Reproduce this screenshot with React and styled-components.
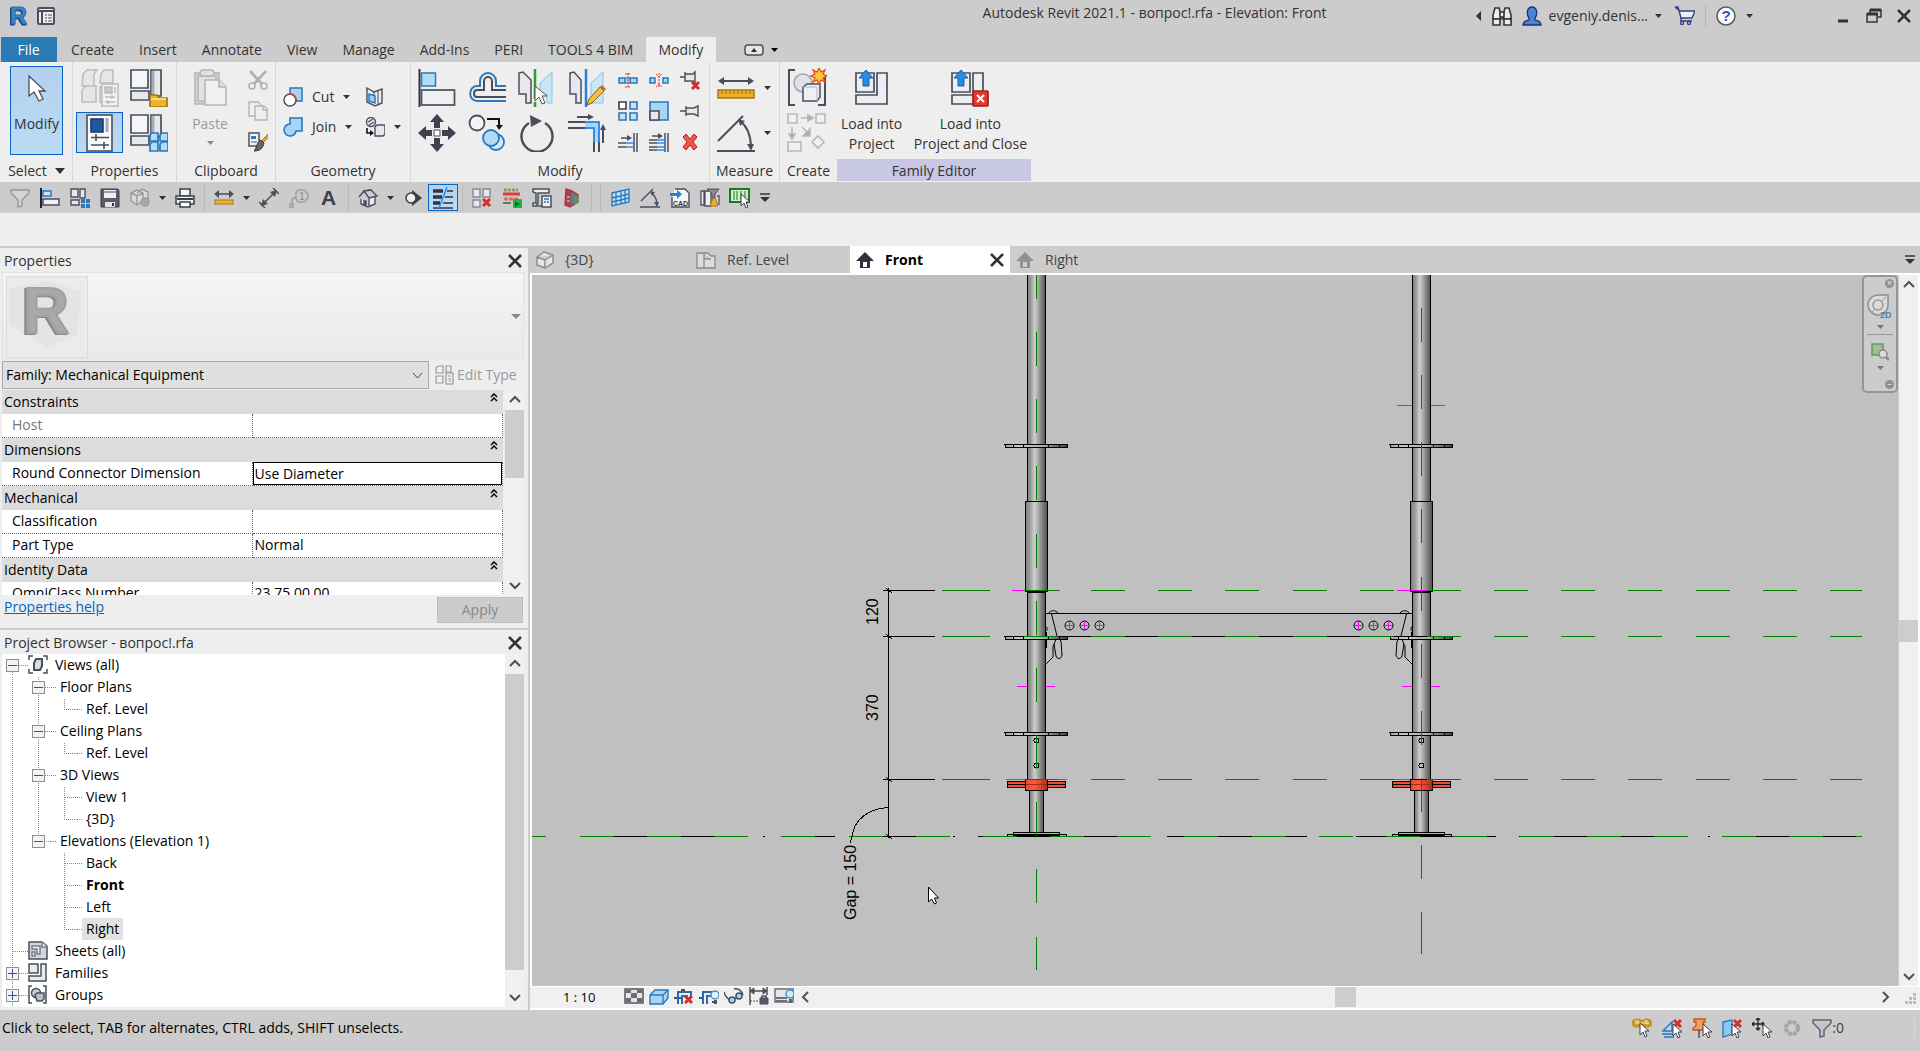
import React, { useState } from 'react';
import styled, { createGlobalStyle, css } from 'styled-components';

const D = '#4a4f5b';
const B = '#2a78bd';
const L = '#b4dbf4';
const G = '#e6e8ee';

const cursor = (x, y) => (
  <path d={`M${x} ${y}v12l3-3 2 5 2-1-2-5h4z`} fill="#fff" stroke="#3c404a" />
);
const redX = (x, y, s = 7) => (
  <path d={`M${x} ${y}l${s} ${s}m0-${s}l-${s} ${s}`} stroke="#d22f2f" strokeWidth="3" />
);

// every icon is [box size, drawing]
const icons = {
  logo: [24, <g>
    <text x="3" y="20" fontFamily="Liberation Sans, sans-serif" fontWeight="bold" fontSize="24" fill="#3b86cf" stroke="#2a6cae" filter="drop-shadow(-1px 1px 0 #12436f)">R</text>
  </g>],
  home: [20, <g>
    <rect x="2" y="2" width="16" height="16" rx="1" fill="#eceef2" stroke={D} strokeWidth="2" />
    <path d="M2 5h16M6 6v12" stroke={D} strokeWidth="2" />
    <path d="M9 9h2m1 0h4m-7 3h2m1 0h4m-7 3h2m1 0h4" stroke={D} strokeWidth="1" />
  </g>],
  arrow: [38, <path d="M11 5v20l5-4 5 9 4-2-4-8h6z" fill="#fff" stroke="#4a4f5b" strokeWidth="1.3" />],
  typeProps: [38, <g fill="#e6e6e6" stroke="#bcbcbc" strokeWidth="1.5">
    <path d="M2 5l4-4h10l-3 4v12H1z M2 20l3-3h10v16H1V22z M20 5l3-4h9v13h-13z M19 18h9v15h-9z" />
    <rect x="21" y="15" width="16" height="22" fill="#f3f3f3" />
    <rect x="24" y="18" width="7" height="6" fill="#c8c8c8" />
    <path d="M24 28h10m-10 5h10m-3-7v4m-4 1v4M34 18v6" />
  </g>],
  famTypes: [38, <g fill={G} stroke={D} strokeWidth="1.7">
    <path d="M1 1h17v18H1z" fill="#f4f5f8" />
    <path d="M21 1h10v26H21z" /><path d="M23 2v24" stroke="#a9adb6" strokeWidth="3" />
    <path d="M1 22h18v9H1z" />
    <path d="M20 26h7l2 3h8v9H20z" fill="#eeb42e" stroke="#a8740c" />
    <path d="M21 30h15" stroke="#fbdf86" />
  </g>],
  properties: [38, <g stroke={D} strokeWidth="1.6">
    <rect x="6" y="1" width="25" height="36" fill="#fafafa" />
    <rect x="10" y="5" width="12" height="13" fill="#24589e" stroke="#163c74" />
    <path d="M26 4v14" stroke="#a9adb6" strokeWidth="3" />
    <path d="M10 23.500h18M10 31h18M15 20v7M23 28v7" />
  </g>],
  famCategory: [38, <g fill={G} stroke={D} strokeWidth="1.7">
    <path d="M1 1h17v18H1z" fill="#f4f5f8" />
    <path d="M21 1h10v22H21z" /><path d="M23 2v20" strokeWidth="3" stroke="#a9adb6" />
    <path d="M1 22h18v9H1z" />
    <path d="M20 21l2-2h6v8h-8zM30 21l2-2h6v8h-8zM20 30l2-2h6v9h-8zM30 30l2-2h6v9h-8z" fill="#b5dcf4" stroke={B} />
  </g>],
  paste: [38, <g fill="#e2e2e2" stroke="#b4b4b4" strokeWidth="1.5">
    <path d="M4 4h24v31H4z" fill="#d4d4d4" /><path d="M7 7h18v25H7z" />
    <rect x="9" y="1" width="14" height="6" rx="3" />
    <path d="M14 11h14l7 7v18H14z" fill="#f0f0f0" /><path d="M28 11v7h7" />
  </g>],
  cutClip: [20, <g fill="none" stroke="#b0b0b0" strokeWidth="1.6">
    <path d="M2 1l12 13M18 1L6 14" strokeWidth="2.600" />
    <circle cx="4" cy="16" r="3" /><circle cx="16" cy="16" r="3" />
  </g>],
  copyClip: [20, <g fill="#efefef" stroke="#b4b4b4" strokeWidth="1.4">
    <path d="M1 1h9l3 3v11H1z" /><path d="M7 5h9l3 3v11H7z" /><path d="M15 5v4h4" />
  </g>],
  match: [20, <g>
    <rect x="1" y="1" width="10" height="13" fill="#f4f4f4" stroke={D} strokeWidth="1.5" />
    <path d="M3 4h5v3H3z" fill={B} /><path d="M3 10h6" stroke={D} />
    <path d="M20 2l-7 7 2 2 6-6z" fill="#e0a02c" stroke="#8b6018" strokeWidth=".6" />
    <path d="M13 8l3 3c-1 5-4 8-10 8 3-3 2-8 7-11z" fill="#60656f" stroke="#30343c" />
  </g>],
  cutGeom: [20, <g>
    <path d="M7 1h12v13H7z" fill="#a8d4f2" stroke={B} strokeWidth="1.5" />
    <circle cx="7" cy="13" r="6" fill="#fff" stroke={D} strokeWidth="1.5" />
    <path d="M7 7a6 6 0 0 1 6 6" fill="none" stroke="#ee3a2c" strokeWidth="2" />
  </g>],
  join: [20, <path d="M7 1h12v13h-6a6 6 0 1 1-6-7z" fill="#a8d4f2" stroke={B} strokeWidth="1.6" />],
  wallJoin: [20, <g>
    <path d="M2 1l7 4 8-3v14l-7 3-8-4z" fill="#eceef2" stroke={D} strokeWidth="1.4" />
    <path d="M4 7l6 2v7l-6-2z" fill="#9fd0f0" stroke={B} strokeWidth="1.500" />
    <path d="M9 5v4M13 4v13" stroke={D} />
  </g>],
  demolish: [20, <g fill="none" stroke={D} strokeWidth="1.4">
    <circle cx="6" cy="5" r="4.500" fill="#e9e9ee" /><path d="M3 5l5-3M4 8l5-3" />
    <path d="M10 10l2-2h8v9l-2 2h-8z" fill={G} />
    <path d="M2 11v5h5" stroke="#111" strokeWidth="1.600" /><path d="M5 13l4 3-4 3z" fill="#111" stroke="none" />
  </g>],
  align: [38, <g>
    <path d="M1.500 0v38" stroke="#30343e" strokeWidth="2" />
    <rect x="3.500" y="4" width="14" height="13" fill={L} stroke={B} strokeWidth="1.500" />
    <rect x="3.500" y="21" width="33" height="15" fill="#f0f1f5" stroke={D} strokeWidth="1.700" />
  </g>],
  offset: [38, <g fill="none" strokeWidth="2">
    <path d="M38 17H28V12a8 8 0 0 0-16 0v5H9c-9 0-9 15 0 15h29" stroke={B} />
    <path d="M38 21H24V12a4 4 0 0 0-8 0v9H9c-4 0-4 7 0 7h29" stroke={D} />
  </g>],
  mirrorPick: [38, <g>
    <path d="M1 4l4-1 8 8v23H8V25H1z" fill={G} stroke={D} strokeWidth="1.500" />
    <path d="M34 3v31h-5v-9h-7V14z" fill="#c9e6f6" stroke="#8cc2e4" />
    <path d="M17 0v30m0 3v5" stroke="#2f9a36" strokeWidth="2.500" />
    <path d="M17 17v15l4-4 3 7 3-1-3-7h5z" fill="#fff" stroke={D} />
  </g>],
  mirrorDraw: [38, <g>
    <path d="M2 4l4-1 7 8v23H8V25H2z" fill={G} stroke={D} strokeWidth="1.500" />
    <path d="M35 3v31h-12V14z" fill="#c9e6f6" stroke="#8cc2e4" />
    <path d="M18 0v38" stroke="#2482dc" strokeWidth="2.500" />
    <path d="M19 36l2-6 11-12 4 4-12 12z" fill="#f1c13c" stroke="#8b5b14" />
    <path d="M32 18l2-2 4 4-2 2z" fill="#c5654c" />
  </g>],
  move: [38, <g fill="#3d424e">
    <path d="M19 0l7 8h-4v6h-6V8h-4zM19 38l7-8h-4v-6h-6v6h-4zM0 19l8-7v4h6v6H8v4zM38 19l-8-7v4h-6v6h6v4z" />
    <rect x="16" y="16" width="6" height="6" fill="#fff" stroke={D} />
  </g>],
  copy: [38, <g strokeWidth="1.800">
    <circle cx="9" cy="9" r="7.500" fill="#f3f3f6" stroke={D} />
    <path d="M19 5h12v8" fill="none" stroke="#111" strokeWidth="2" /><path d="M28 11h7l-4 5z" fill="#111" />
    <circle cx="28" cy="28" r="8" fill="#d3ebf8" stroke={B} /><circle cx="23" cy="24" r="8" fill={L} stroke={B} />
  </g>],
  rotate: [38, <g>
    <path d="M11 9a15.500 15.500 0 1 0 16 0" fill="none" stroke={D} strokeWidth="2.500" />
    <path d="M12 1l12 6-11 6z" fill={D} />
  </g>],
  trimCorner: [38, <g fill="none" strokeWidth="2">
    <path d="M0 8h17M0 14h17M26 28v10M31 28v10" stroke={D} />
    <path d="M17 11h11v17" stroke="#a8d6f6" strokeWidth="4" />
    <path d="M17 8h14v20M17 14h9v14" stroke="#2d8fe8" />
    <path d="M9 3h15m11 26V13" stroke={D} /><path d="M20 0l6 3-6 3zM32 16l3-6 3 6z" fill={D} stroke="none" />
  </g>],
  split: [20, <g>
    <path d="M1 8h6v5H1zM12 8h7v5h-7z" fill="#a8d4f2" stroke={B} strokeWidth="1.500" />
    <path d="M7 8h5v5H7z" fill="#a8d4f2" stroke={B} />
    <path d="M10 3v15M7 4l6 0M7 17h6" stroke="#d93025" strokeDasharray="2 1" />
  </g>],
  splitGap: [20, <g>
    <path d="M1 8h5v5H1zM14 8h5v5h-5z" fill="#a8d4f2" stroke={B} strokeWidth="1.500" />
    <path d="M10 3v15M7 4l3 3 3-3M7 17l3-3 3 3" stroke="#d93025" fill="none" strokeDasharray="2 1" />
  </g>],
  unpin: [20, <g fill={G} stroke={D} strokeWidth="1.400">
    <path d="M0 7h5M5 2v10M5 4h8l2-2v11l-2-2H5z" />{redX(12, 12)}
  </g>],
  array: [20, <g strokeWidth="1.600">
    <path d="M1 1h7v7H1z" fill="#fff" stroke="#3a3e48" />
    <path d="M12 1h7v7h-7zM1 12h7v7H1zM12 12h7v7h-7z" fill="#c4e3f6" stroke={B} />
  </g>],
  scale: [20, <g strokeWidth="1.600">
    <path d="M1 1h18v18H1z" fill="#a8d6f2" stroke={B} /><path d="M1 10h9v9H1z" fill={G} stroke={D} />
  </g>],
  pin: [20, <path d="M0 10h6M6 5v10M6 7h8l4-2v10l-4-2H6" fill={G} stroke={D} strokeWidth="1.400" />],
  trimOne: [20, <g strokeWidth="1.500">
    <path d="M0 11h8M0 15h8M19 1v19M16 1v19M3 6h8" stroke={D} /><path d="M8 11h8M8 15h8" stroke="#2d8fe8" />
    <path d="M9 3l5 3-5 3z" fill={D} />
  </g>],
  trimMany: [20, <g strokeWidth="1.500">
    <path d="M0 8h8M0 11h8M0 15h8M0 18h8M19 1v19M16 1v19M3 4h8" stroke={D} />
    <path d="M8 8h8M8 11h8M8 15h8M8 18h8" stroke="#2d8fe8" /><path d="M9 1l5 3-5 3z" fill={D} />
  </g>],
  del: [20, <path d="M3 5l3-3 4 5 4-5 3 3-4 5 4 5-3 3-4-5-4 5-3-3 4-5z" fill="#f2554d" stroke="#b3211b" />],
  measure: [38, <g>
    <path d="M4 12h30" stroke={D} strokeWidth="2" /><path d="M1 12l6-4v8zM37 12l-6-4v8z" fill={D} />
    <rect x="1" y="21" width="36" height="8" fill="#ecb028" stroke="#a87612" strokeWidth="1.500" />
    <path d="M5 22v3m4-3v3m4-3v3m4-3v3m4-3v3m4-3v3m4-3v3m4-3v3" stroke="#8b6010" />
  </g>],
  angle: [38, <g fill="none" stroke={D} strokeWidth="2">
    <path d="M1 27L26 2M0 37h38M23 7c8 6 11 17 11 27" />
    <path d="M21 5l7 2-5 5zM30 30h7l-3 7z" fill={D} stroke="none" />
  </g>],
  createGroup: [40, <g>
    <path d="M8 2H2v35h6M31 37h7V8" fill="none" stroke={D} strokeWidth="2" />
    <circle cx="16" cy="15" r="9" fill="#dfe2ea" stroke="#a0a4ae" strokeWidth="1.500" />
    <path d="M16 19l4-3h13v13l-3 4H16z" fill="#eef0f5" stroke={D} strokeWidth="1.500" /><path d="M16 19h14v14" fill="none" stroke="#b0b4bd" />
    <path d="M32 0l2 4 4-2-2 4 4 2-4 2 2 4-4-2-2 4-2-4-4 2 2-4-4-2 4-2-2-4 4 2z" fill="#fbc63a" stroke="#e24c1b" strokeWidth="1.300" />
  </g>],
  createSim: [40, <g fill="#f0f0f0" stroke="#b8b8b8" strokeWidth="1.600">
    <path d="M1 1h9v9H1zM29 1h9v9h-9zM1 29h13v9H1zM31 23l6 6-6 6-6-6z" />
    <path d="M14 5h8M5 14v8M15 14l6 6" /><path d="M21 2l5 3-5 3zM2 21l3 5 3-5zM23 16v7h-7z" fill="#a8a8a8" />
  </g>],
  load: [38, <g fill="#eceef3" stroke={D} strokeWidth="1.700">
    <path d="M3 4h18v19H3zM24 4h10v31H3V26h21z" />
    <path d="M13 1l7 8h-4v8h-6V9H6z" fill="#2a8ae4" stroke="#1562b0" strokeWidth="1" />
  </g>],
  loadClose: [38, <g fill="#eceef3" stroke={D} strokeWidth="1.700">
    <path d="M1 4h18v19H1zM22 4h10v20H22zM1 26h22v9H1z" />
    <path d="M10 1l7 8h-4v8H7V9H3z" fill="#2a8ae4" stroke="#1562b0" strokeWidth="1" />
    <rect x="22" y="22" width="15" height="15" rx="1" fill="#e03a32" stroke="#a1201b" />
    <path d="M26 26l7 7m0-7l-7 7" stroke="#fff" strokeWidth="2" />
  </g>],
  filter: [20, <path d="M1 2h18v3l-7 7v6l-4 1v-7L1 5z" fill="#d4d4d4" stroke="#939393" strokeWidth="1.300" />],
  alignSm: [20, <g><path d="M1 0v20" stroke="#222" strokeWidth="2" />
    <path d="M3 3h8v5H3z" fill="#cfe8f8" stroke={B} strokeWidth="1.500" /><path d="M3 11h16v6H3z" fill="#f0f0f4" stroke={D} strokeWidth="1.500" /></g>],
  famSm: [20, <g><path d="M1 1h7v8H1zM10 1h5v9h-5zM1 12h8v5H1z" fill={G} stroke={D} strokeWidth="1.400" />
    <path d="M11 11h4v4h-4zM16 11h4v4h-4zM11 16h4v4h-4zM16 16h4v4h-4z" fill={B} /></g>],
  save: [20, <g><path d="M1 1h17l1 2v16H1z" fill="#585d69" stroke="#3b3f49" /><rect x="4" y="2" width="12" height="8" fill="#eee" />
    <path d="M4 4h12" stroke="#4a4f5b" /><rect x="5" y="14" width="10" height="5" fill="#e4e4e8" /><rect x="12" y="15" width="2" height="3" fill="#333" /></g>],
  sync: [20, <g fill="#dadada" stroke="#9a9a9a" strokeWidth="1.400"><path d="M1 5l6-3 6 3v8l-6 4-6-4zM7 5l5-4 6 3v8l-5 3M1 5l6 3 6-3M7 8v9" /><circle cx="15" cy="14" r="4" fill="#a9a9a9" /></g>],
  print: [20, <g strokeWidth="1.500" stroke="#3b3f49"><path d="M5 1h10v7H5z" fill="#f4f4f4" /><path d="M1 8h18v8H1z" fill="#f0f0f4" /><path d="M2 11h16" strokeWidth="2" /><path d="M5 14h10v5H5z" fill="#fff" /></g>],
  measureSm: [20, <g><path d="M2 6h16" stroke={D} strokeWidth="1.500" /><path d="M0 6l5-4v8zM20 6l-5-4v8z" fill={D} /><rect x="1" y="12" width="18" height="4" fill="#eeb22a" stroke="#a87612" /></g>],
  dim: [20, <g stroke={D} strokeWidth="1.500"><path d="M4 16L16 4M0 14l6 6M14 0l6 6" /><path d="M2 18l2-7 5 5zM18 2l-7 2 5 5z" fill={D} stroke="none" /></g>],
  tag: [20, <g fill="none" stroke="#a0a0a0" strokeWidth="1.500"><path d="M9 2h6l4 4v4l-4 4H9L7 11V5zM7 9L3 11v5" /><rect x="1" y="16" width="3" height="3" />
    <text x="10" y="12" fontSize="10" fontFamily="Liberation Sans, sans-serif" fill="#888" stroke="none">1</text></g>],
  text: [20, <text x="2" y="17" fontSize="21" fontWeight="bold" fontFamily="Liberation Sans, sans-serif" fill="#3d4047">A</text>],
  house: [20, <g stroke={D} strokeWidth="1.400" fill="#e9eaef"><path d="M3 9v7l7 3 7-3V8l-5-6-6 1z" /><path d="M1 9l5-6 5 7v9M6 3l7-1 6 6-8 2" fill="#c9ccd4" /><path d="M6 13h2v4H6z" fill={D} /></g>],
  section: [20, <g><path d="M9 2l10 8-10 8z" fill="#3b3f49" /><circle cx="8" cy="10" r="5" fill="#eee" stroke="#3b3f49" strokeWidth="1.500" /></g>],
  thin: [24, <g stroke="#30343e"><path d="M2 5h10M2 11h9M2 17h7" strokeWidth="3.500" /><path d="M16 5h6M14 11h8M12 17h10M2 22h20" strokeWidth="1.500" /><path d="M16 1L8 22" stroke="#2d8fe8" strokeWidth="1.600" /></g>],
  closeHidden: [20, <g fill={G} stroke="#858993" strokeWidth="1.400"><path d="M1 1h7v8H1zM1 12h7v7H1zM11 1h7v8h-7z" />{redX(11, 11)}</g>],
  switchWin: [20, <g><path d="M2 2h14" stroke="#8b9a70" strokeWidth="3" strokeDasharray="3 1" /><path d="M1 6h17" stroke="#d84040" strokeWidth="3" /><path d="M2 11h14" stroke="#e26a5a" strokeWidth="3" strokeDasharray="4 1" /><path d="M1 15h8" stroke="#3e8d4a" strokeWidth="2" />
    <rect x="11" y="11" width="9" height="9" rx="1" fill="#16b840" /><path d="M13 14l5 2-5 3z" fill="#063" /></g>],
  userInt: [20, <g fill="#eee" stroke={D} strokeWidth="1.500"><path d="M3 1h14v4H6v10l-2 3H1v-3h3V5L1 4V1zM5 18h6" /><rect x="10" y="8" width="9" height="11" /><path d="M12 11h5M12 14h2m1 0h2" stroke={B} /></g>],
  renderCube: [20, <g><path d="M4 1l6 2 6 4v7l-8 5-5-2z" fill="#9a4850" stroke="#b8353a" strokeWidth="1.500" /><path d="M9 4l4 2v9l-4 3z" fill="#5878a8" /><path d="M12 6l5 3v5l-5 3z" fill="#6a8a68" /><path d="M5 9h3M5 13h3" stroke="#ddd" /></g>],
  grid: [20, <g stroke={B} strokeWidth="1.300" fill="#c2e0f4"><path d="M2 5l17-4v13L2 18z" /><path d="M6 4v13M11 3v13M15 2v13M2 10l17-4M2 14l17-4" /></g>],
  angleSm: [20, <g fill="none" stroke={D} strokeWidth="1.400"><path d="M1 13L13 1M0 19h20M11 5c5 3 6 8 6 12" /><path d="M10 3l5 1-3 4zM14 14h5l-2 5z" fill={D} stroke="none" /></g>],
  cad: [20, <g><path d="M5 1h10l4 4v14H2V9" fill="#f4f4f6" stroke={D} strokeWidth="1.400" /><path d="M0 5h7V2l5 4-5 5V8H0z" fill="#2384d8" /><text x="3" y="18" fontSize="7" fontWeight="bold" fontFamily="Liberation Sans, sans-serif" fill="#333">CAD</text></g>],
  purge: [20, <g><path d="M1 3h3v14H1zM5 3h6v15H5zM17 8h2v9" fill="#f0f0f4" stroke={D} strokeWidth="1.300" /><path d="M7 1h12l-4 5v4h-3V6z" fill="#888c96" stroke={D} /><path d="M13 10h2l3 8h-8z" fill="#f0b02a" stroke="#a87410" /></g>],
  selBox: [22, <g><rect x="1" y="2" width="19" height="13" fill="#d6ebd0" stroke="#187a1e" strokeWidth="2" /><path d="M5 4v9M8 4v9M12 4v9M16 4v9" stroke="#187a1e" />{cursor(12, 7)}</g>],
  bino: [20, <g stroke="#333" strokeWidth="1.600" fill="#ececec"><path d="M3 2h4l2 7v4H1V9zM13 2h4l2 7v4h-8V9z" /><path d="M1 13h7v6H1zM12 13h7v6h-7zM8 6h4v5H8z" /></g>],
  user: [20, <g fill="#4c83d6" stroke="#183470" strokeWidth="1.300"><path d="M1 19c0-4 3-4 6-5v-2C4 8 5 1 10 1s6 7 3 11v2c3 1 6 1 6 5z" /></g>],
  cart: [20, <g stroke="#33427e" strokeWidth="1.400"><path d="M0 1h3l3 11h11l3-7H5z" fill="#eef0f8" /><path d="M6 12v3h11" fill="none" /><circle cx="7" cy="17" r="1.500" fill="#fff" /><circle cx="14" cy="17" r="1.500" fill="#fff" /></g>],
  help: [20, <g><circle cx="10" cy="10" r="9" fill="#fafafa" stroke="#555963" strokeWidth="1.500" /><text x="10" y="15" textAnchor="middle" fontSize="15" fontWeight="bold" fontFamily="Liberation Sans, sans-serif" fill="#2458b4">?</text></g>],
  editType: [20, <g fill="#eee" stroke="#9a9a9a" strokeWidth="1.200"><path d="M1 3l2-2h5v7H1zM11 1h5v6h-5zM1 11h7v7H1z" /><rect x="11" y="8" width="7" height="11" /><path d="M13 11h3M13 14h3M14 16h2" /></g>],
  views: [20, <g fill="none" stroke={D} strokeWidth="1.500"><path d="M5 1H1v4M15 1h4v4M5 18H1v-4M15 18h4v-4" /><path d="M6 8l2-4h6v7l-2 4H6z" fill="#d9dce4" strokeWidth="2" /></g>],
  sheets: [20, <g fill="#d2d5dc" stroke={D} strokeWidth="1.500"><path d="M1 1h13l5 4v13H1z" /><path d="M4 5h8v8H9V8H4zM4 11h3v4H4zM14 1v5h5" fill="#f3f3f6" stroke="#777c88" /></g>],
  families: [20, <path d="M1 1h9v9H1zM13 1h5v17H1v-5h12z" fill="#e9ebf0" stroke={D} strokeWidth="1.500" />],
  groups: [20, <g fill="none" stroke={D} strokeWidth="1.500"><path d="M4 1H1v17h3M15 1h3v17h-3" /><circle cx="8" cy="8" r="4.500" fill="#c8ccd6" /><path d="M7 10l2-2h7v6l-2 2H9z" fill="#b8bdc9" /></g>],
  cube: [18, <path d="M1 6l7-5 9 3v8l-8 5-8-3zM1 6l8 3 8-5M9 9v8" fill="#e4e4e4" stroke="#8a8a8a" strokeWidth="1.400" />],
  plan: [20, <path d="M1 3h7v15H1zM8 3h4l3 3h4v12H8V9h7" fill="#ddd" stroke="#8a8a8a" strokeWidth="1.300" />],
  elevOn: [18, <g fill="#2e323c"><path d="M9 1l9 9h-4v7H4v-7H0z" /><path d="M7 11h4v5H7z" fill="#fff" /></g>],
  elevOff: [18, <g fill="#8e9199"><path d="M9 1l9 9h-4v7H4v-7H0z" /><path d="M7 11h4v5H7z" fill="#ccc" /></g>],
  detail: [20, <g><path d="M1 2h18v14H1z" fill="#e6e6e6" stroke="#555" strokeWidth="1.500" /><path d="M2 3h5v3H2zM13 3h5v3h-5zM7 6h6v5H7zM2 11h5v4H2zM13 11h5v4h-5z" fill="#666b75" /></g>],
  visual: [20, <g stroke={B} strokeWidth="1.400" fill="#a9d5f2"><path d="M1 8l5-5h13v8l-5 6H1z" /><path d="M1 8h13v9M14 8l5-5" fill="none" /></g>],
  crop: [20, <g fill="none" strokeWidth="2"><path d="M0 11h4M4 11h3" stroke={D} /><path d="M4 17V5h13v4M8 17V9h6" stroke="#2b6cb0" /><path d="M7 3h4" stroke={D} />{redX(11, 9)}</g>],
  cropShow: [20, <g fill="none" strokeWidth="2"><path d="M0 11h4M13 15h4" stroke={D} /><path d="M4 17V5h12M8 17V9h6" stroke="#2b6cb0" /><circle cx="16" cy="8" r="4" fill="#e8f4fc" stroke="#4a90d0" strokeWidth="1.500" /><path d="M15 13h3v4h-3z" fill="#555" /></g>],
  glasses: [20, <g fill="none" stroke={D} strokeWidth="1.500"><path d="M0 5c1 5 3 6 6 8M10 2c4-1 8 2 9 6M9 12l3-1" /><circle cx="8" cy="13" r="3" fill="#a8d4f2" /><circle cx="15" cy="9" r="3" fill="#a8d4f2" /></g>],
  constraints: [20, <g stroke={D} fill="none"><path d="M1 0v18M18 0v8M1 4h17" strokeWidth="1.500" /><path d="M1 14h9" strokeDasharray="2 1" /><path d="M1 4l4-3v6zM18 4l-4-3v6z" fill={D} /><path d="M11 11h8v6h-8z" fill="#555a64" /><path d="M13 11V9h4v2" strokeWidth="1.500" /></g>],
  reveal: [20, <g><path d="M1 2h18v13H1z" fill="#e4e6ea" stroke="#6b6f79" strokeWidth="1.500" /><path d="M2 11h11M2 14h11" stroke="#6b6f79" strokeWidth="2" /><circle cx="16" cy="7" r="4" fill="#d4ebfa" stroke="#4a90d0" strokeWidth="1.500" /><path d="M15 12h3v4h-3z" fill="#666" /></g>],
  selLinks: [20, <g><path d="M1 5c1-4 7-4 9 0 2-4 8-4 9 0-1 4-7 4-9 0-2 4-8 4-9 0z" fill="none" stroke="#c8901c" strokeWidth="3" /><path d="M3 3h4M12 3h4M7 5h6" stroke="#f8cf5a" strokeWidth="1.500" />{cursor(8, 5)}</g>],
  selUnder: [20, <g><path d="M1 13l9-9v9zM0 16h13M2 19h10" fill={L} stroke={B} strokeWidth="1.500" />{redX(12, 2)}{cursor(11, 6)}</g>],
  selPin: [20, <g><path d="M2 1h11v3H11l1 4 3 2v2H1v-2l3-2V4H2z" fill="#f0a05a" stroke="#c0551c" strokeWidth="1.300" /><path d="M7 12v8" stroke={D} strokeWidth="1.500" />{cursor(11, 6)}</g>],
  selFace: [20, <g><path d="M1 4l9-2v14l-9 3z" fill="#8cc8f0" stroke={B} strokeWidth="1.300" />{redX(12, 2)}{cursor(10, 6)}</g>],
  dragSel: [20, <g><path d="M0 6h12M6 0v12M4 2l2-2 2 2M4 10l2 2 2-2M2 4L0 6l2 2M10 4l2 2-2 2" fill="none" stroke="#222" strokeWidth="1.300" />{cursor(11, 6)}</g>],
  busy: [20, <circle cx="10" cy="10" r="6" fill="none" stroke="#a2a2a2" strokeWidth="4" strokeDasharray="3.700 1" />],
  filterOn: [20, <path d="M1 2h18v3l-7 7v6l-4 1v-7L1 5z" fill="#c3c6cd" stroke="#60646e" strokeWidth="1.500" />],
  wheel: [26, <g><path d="M12 1h9v11a10 10 0 1 1-9-11z" fill="#dcdcdc" stroke="#8d8d8d" strokeWidth="1.500" /><circle cx="11" cy="11" r="5" fill="none" stroke="#9a9a9a" strokeWidth="1.500" /><path d="M4 19l4-4M14 8l5-5" stroke="#9a9a9a" />
    <text x="13" y="24" fontSize="9" fontWeight="bold" fontFamily="Liberation Sans, sans-serif" fill="#4b7fbd">2D</text></g>],
  region: [18, <g><path d="M1 1h11v11H1z" fill="#a8b89a" stroke="#58a058" strokeWidth="1.500" /><path d="M15 14l3 3" stroke="#888" strokeWidth="2.500" /><circle cx="12" cy="11" r="4" fill="#dcdcdc" stroke="#8a8a8a" strokeWidth="1.500" /></g>],
};

const Icon = ({ name }) => {
  const [size, art] = icons[name];
  return <svg width={size} height={size} viewBox={`0 0 ${size} ${size}`} aria-hidden="true">{art}</svg>;
};

const Caret = ({ color = '#333' }) => (
  <svg width="7" height="4" viewBox="0 0 7 4" aria-hidden="true"><path d="M0 0h7L3.500 4z" fill={color} /></svg>
);

const Cross = () => (
  <svg width="14" height="14" viewBox="0 0 14 14" aria-hidden="true">
    <path d="M1 1l12 12M13 1L1 13" stroke="#333" strokeWidth="2.500" />
  </svg>
);

const chevrons = { up: 'M1 8l5-5 5 5', down: 'M1 4l5 5 5-5', left: 'M8 1L3 6l5 5', right: 'M4 1l5 5-5 5' };
const Chevron = ({ dir }) => (
  <svg width="12" height="12" viewBox="0 0 12 12" aria-hidden="true">
    <path d={chevrons[dir]} fill="none" stroke="#505050" strokeWidth="2" />
  </svg>
);

const ribbonTabs = ['Create', 'Insert', 'Annotate', 'View', 'Manage', 'Add-Ins', 'PERI', 'TOOLS 4 BIM', 'Modify'];

const toolbar = [
  'filter', 'alignSm', 'famSm', 'save', 'sync', '>', 'print', '|', 'measureSm', '>', 'dim', 'tag', 'text', '|',
  'house', '>', 'section', 'thin', '|', 'closeHidden', 'switchWin', 'userInt', 'renderCube', '|', '|',
  'grid', 'angleSm', 'cad', 'purge', 'selBox',
];

const properties = [
  { section: 'Constraints' },
  { name: 'Host', value: '', muted: true },
  { section: 'Dimensions' },
  { name: 'Round Connector Dimension', value: 'Use Diameter', focused: true },
  { section: 'Mechanical' },
  { name: 'Classification', value: '' },
  { name: 'Part Type', value: 'Normal' },
  { section: 'Identity Data' },
  { name: 'OmniClass Number', value: '23.75.00.00' },
];

// cells: v = line through, t = tee, e = end elbow, s = spacer,
// f = first toggle, l = last toggle, - / + = toggle
const tree = [
  { cells: 'f', text: 'Views (all)', icon: 'views' },
  { cells: 'v-', text: 'Floor Plans' },
  { cells: 'vve', text: 'Ref. Level' },
  { cells: 'v-', text: 'Ceiling Plans' },
  { cells: 'vve', text: 'Ref. Level' },
  { cells: 'v-', text: '3D Views' },
  { cells: 'vvt', text: 'View 1' },
  { cells: 'vve', text: '{3D}' },
  { cells: 'vl', text: 'Elevations (Elevation 1)' },
  { cells: 'vst', text: 'Back' },
  { cells: 'vst', text: 'Front', bold: true },
  { cells: 'vst', text: 'Left' },
  { cells: 'vse', text: 'Right', selected: true },
  { cells: 't', text: 'Sheets (all)', icon: 'sheets' },
  { cells: '+', text: 'Families', icon: 'families' },
  { cells: '+', text: 'Groups', icon: 'groups' },
];

const cellLines = {
  v: 'M13 0v22',
  t: 'M13 0v22M13 11h13',
  e: 'M13 0v11h13',
  f: 'M13 11v11M13 11h13',
  l: 'M13 0v11h13',
  '-': 'M13 0v22M13 11h13',
  '+': 'M13 0v22M13 11h13',
  s: '',
};

const TreeCell = ({ kind }) => {
  const box = 'f-+l'.includes(kind);
  const art = (
    <svg width="26" height="22" viewBox="0 0 26 22" shapeRendering="crispEdges" aria-hidden="true">
      <path d={cellLines[kind]} transform="translate(.5 .5)" stroke="#8a8a8a" strokeDasharray="1 1" fill="none" />
      {box && <rect x="7.500" y="5.500" width="12" height="12" fill="#f3f3f3" stroke="#8f8f8f" />}
      {box && <path d={kind === '+' ? 'M9 11.500h9M13.500 7v9' : 'M9 11.500h9'} stroke="#33529c" />}
    </svg>
  );
  return box ? <PlainButton aria-label={kind === '+' ? 'Expand' : 'Collapse'}>{art}</PlainButton> : art;
};

const Disc = ({ y }) => (
  <g>
    <path d={`M0 ${y + 0.5}h62v3H1z`} fill="url(#disc)" stroke="#000" />
    <path d={`M8.500 ${y}v4M18.500 ${y}v4M43.500 ${y}v4M54.500 ${y}v4`} stroke="#000" />
  </g>
);

// one scaffold standard, x measured from the left end of its rosettes
const Standard = ({ x }) => (
  <g transform={`translate(${x} 0)`} shapeRendering="crispEdges">
    <rect x="22.500" y="270" width="18" height="232" fill="url(#pipe)" stroke="#000" />
    <rect x="22.500" y="592" width="18" height="188" fill="url(#pipe)" stroke="#000" />
    <rect x="20.500" y="501.500" width="22" height="90" fill="url(#pipe)" stroke="#000" />
    <rect x="24.500" y="790" width="14" height="43" fill="url(#pipe)" stroke="#000" />
    <Disc y={444} />
    <Disc y={636} />
    <Disc y={732} />
    <circle cx="31.500" cy="740.500" r="2.500" fill="none" stroke="#000" />
    <circle cx="31.500" cy="765.500" r="2.500" fill="none" stroke="#000" />
    <path d="M2.500 781.500h58v6h-58zM2 784.500h59" fill="#f9492c" stroke="#000" />
    <rect x="20.500" y="779.500" width="22" height="11" fill="url(#collar)" stroke="#000" />
    <path d="M21 784.500h21" stroke="#a32a18" />
    <path d="M8.500 832.500h46v3h-46zM2 836v-1.500h59v1.500z" fill="#b5b5b5" stroke="#000" />
  </g>
);

const Hook = ({ mirror }) => (
  <g transform={mirror ? 'translate(2458 0) scale(-1 1)' : undefined} fill="none" stroke="#000">
    <path d="M1049 613c1-3 7-3 9 0M1051.500 614l6 24M1057 637l4 4 1 14c-1 5-5 4-6 1l-2-12 3-7" />
    <path d="M1055 644l-2 2v11l-7 7M1046 627c2 0 1 4 0 4M1046.500 632v16" />
  </g>
);

const Drawing = () => (
  <svg width="100%" height="100%" role="img" aria-label="Front elevation">
    <defs>
      <linearGradient id="pipe">
        <stop offset="0" stopColor="#7c7c7c" /><stop offset=".2" stopColor="#9c9c9c" />
        <stop offset=".4" stopColor="#cfcfcf" /><stop offset=".6" stopColor="#a6a6a6" />
        <stop offset="1" stopColor="#505050" />
      </linearGradient>
      <linearGradient id="disc">
        <stop offset="0" stopColor="#a0a0a0" /><stop offset=".2" stopColor="#c9c9c9" />
        <stop offset=".6" stopColor="#b0b0b0" /><stop offset=".8" stopColor="#777" />
        <stop offset="1" stopColor="#444" />
      </linearGradient>
      <linearGradient id="collar">
        <stop offset="0" stopColor="#f0442a" /><stop offset=".4" stopColor="#ff5a3a" />
        <stop offset="1" stopColor="#b02c18" />
      </linearGradient>
    </defs>
    <g transform="translate(-532 -275)">
      <g shapeRendering="crispEdges" fill="none">
        <rect x="1046" y="613" width="366" height="23" fill="#b9b9b9" />
        <path d="M1046 613.500h366M1046 636.500h366" stroke="#000" />
        <path d="M600 836.500h140m23 0h2m24 0h46m48 0h40m30 0h2m23 0h140m23 0h2m24 0h140m23 0h2m24 0h140m23 0h2m24 0h140m23 0h2m24 0h128" stroke="#000" />
        <path d="M1006 779.500h61M1393 779.500h20M1012 590.500h48M1017 686.500h38M1402 686.500h38M1397 405.500h48" stroke="#f0f" />
      </g>
      <Hook />
      <Hook mirror />
      <Standard x={1005} />
      <Standard x={1390} />
      <g shapeRendering="crispEdges" fill="none" stroke="#008000">
        <path d="M942 590.500h48M942 636.500h48M942 779.500h48" />
        <path d="M1024 590.500h838M1024 636.500h838M1024 779.500h838M546 836.500h-14M580 836.500h1282" strokeDasharray="34 33.150" />
        <path d="M1036.500 265v705" strokeDasharray="34 33.150" />
        <path d="M1421.500 308v612M1421.500 920v34" strokeDasharray="34 33.150" />
        <path d="M1397 590.500h31" stroke="#f0f" />
      </g>
      {[1069, 1084, 1099, 1358, 1373, 1388].map((x) => (
        <g key={x}>
          <circle cx={x + 0.5} cy="625.500" r="4.500" fill="none" stroke="#000" />
          <path d={`M${x - 4} 625.500h9M${x + 0.5} 621v9`} stroke="#f0f" shapeRendering="crispEdges" />
        </g>
      ))}
      <g stroke="#000" fill="none" shapeRendering="crispEdges">
        <path d="M888.500 588v250M883 590.500h52M883 636.500h52M883 779.500h52" />
        <path d="M886 588l6 5M886 634l6 5M886 777l6 5M886 834l6 5" />
        <path d="M888 807.500c-18 1-34 11-36 29l-2 7" />
      </g>
      <DimText transform="translate(878 625) rotate(-90)">120</DimText>
      <DimText transform="translate(878 721) rotate(-90)">370</DimText>
      <DimText transform="translate(856 920) rotate(-90)">Gap = 150</DimText>
      <path d="M928.500 887v15l3-3 3 5 2-1-2-5h4z" fill="#fff" stroke="#000" />
    </g>
  </svg>
);

const App = () => {
  const [activeTab, setActiveTab] = useState('Modify');
  const [diameter, setDiameter] = useState('Use Diameter');

  return (
    <>
      <GlobalStyle />
      <Window>
        <TitleBar>
          <Icon name="logo" />
          <Icon name="home" />
          <Title>Autodesk Revit 2021.1 - вопрос!.rfa - Elevation: Front</Title>
          <Account>
            <svg width="6" height="10" viewBox="0 0 6 10" aria-hidden="true"><path d="M5 0v10L0 5z" fill="#333" /></svg>
            <Icon name="bino" />
            <Icon name="user" />
            <AccountButton>evgeniy.denis...<Caret /></AccountButton>
            <Icon name="cart" />
            <Bar />
            <Icon name="help" />
            <Caret />
          </Account>
          <WindowButtons>
            <PlainButton aria-label="Minimize"><svg width="16" height="16"><path d="M3 13h10" stroke="#333" strokeWidth="3" /></svg></PlainButton>
            <PlainButton aria-label="Restore"><svg width="16" height="16"><path d="M4 5V2h11v7h-3M1 6h10v8H1z" fill="none" stroke="#333" strokeWidth="1.500" /><path d="M4 2h11M1 6h11" stroke="#333" strokeWidth="3" /></svg></PlainButton>
            <PlainButton aria-label="Close"><Cross /></PlainButton>
          </WindowButtons>
        </TitleBar>

        <RibbonTabs>
          <FileTab>File</FileTab>
          {ribbonTabs.map((tab) => (
            <RibbonTab key={tab} $active={tab === activeTab} onClick={() => setActiveTab(tab)}>{tab}</RibbonTab>
          ))}
          <CollapseButton aria-label="Minimize ribbon">
            <svg width="20" height="12" viewBox="0 0 20 12"><rect x="1" y="1" width="18" height="10" rx="3" fill="#e4e6ea" stroke={D} strokeWidth="1.500" /><path d="M7 8l3-4 3 4z" fill="#333" /></svg>
            <Caret color="#000" />
          </CollapseButton>
        </RibbonTabs>

        <Ribbon>
          <Panel $width={72}>
            <PanelBody $center>
              <ModifyButton><Icon name="arrow" />Modify</ModifyButton>
            </PanelBody>
            <PanelTitle>Select <svg width="10" height="6"><path d="M0 0h10L5 6z" fill="#333" /></svg></PanelTitle>
          </Panel>
          <Panel $width={104}>
            <PropertyGrid>
              <IconButton aria-label="Type Properties"><Icon name="typeProps" /></IconButton>
              <IconButton aria-label="Family Types"><Icon name="famTypes" /></IconButton>
              <IconButton aria-label="Properties" $active><Icon name="properties" /></IconButton>
              <IconButton aria-label="Family Category"><Icon name="famCategory" /></IconButton>
            </PropertyGrid>
            <PanelTitle>Properties</PanelTitle>
          </Panel>
          <Panel $width={99}>
            <PanelBody>
              <PasteButton disabled><Icon name="paste" />Paste<Caret color="#888" /></PasteButton>
              <SmallGrid $columns={1}>
                <Icon name="cutClip" />
                <Icon name="copyClip" />
                <Icon name="match" />
              </SmallGrid>
            </PanelBody>
            <PanelTitle>Clipboard</PanelTitle>
          </Panel>
          <Panel $width={135}>
            <GeometryGrid>
              <TextTool><Icon name="cutGeom" />Cut<Caret /></TextTool>
              <TextTool><Icon name="wallJoin" /></TextTool>
              <TextTool><Icon name="join" />Join<Caret /></TextTool>
              <TextTool><Icon name="demolish" /><Caret /></TextTool>
            </GeometryGrid>
            <PanelTitle>Geometry</PanelTitle>
          </Panel>
          <Panel $width={299}>
            <PanelBody>
              <BigGrid>
                {['align', 'offset', 'mirrorPick', 'mirrorDraw', 'move', 'copy', 'rotate', 'trimCorner'].map((name) => (
                  <PlainButton key={name} aria-label={name}><Icon name={name} /></PlainButton>
                ))}
              </BigGrid>
              <SmallGrid $columns={3}>
                {['split', 'splitGap', 'unpin', 'array', 'scale', 'pin', 'trimOne', 'trimMany', 'del'].map((name) => (
                  <PlainButton key={name} aria-label={name}><Icon name={name} /></PlainButton>
                ))}
              </SmallGrid>
            </PanelBody>
            <PanelTitle>Modify</PanelTitle>
          </Panel>
          <Panel $width={70}>
            <StackBody>
              <DropTool><Icon name="measure" /><Caret /></DropTool>
              <DropTool><Icon name="angle" /><Caret /></DropTool>
            </StackBody>
            <PanelTitle>Measure</PanelTitle>
          </Panel>
          <Panel $width={57} $last>
            <StackBody>
              <DropTool><Icon name="createGroup" /></DropTool>
              <DropTool><Icon name="createSim" /></DropTool>
            </StackBody>
            <PanelTitle>Create</PanelTitle>
          </Panel>
          <Panel $width={194} $last>
            <LoadBody>
              <LoadButton><Icon name="load" />Load into<br />Project</LoadButton>
              <LoadButton><Icon name="loadClose" />Load into<br />Project and Close</LoadButton>
            </LoadBody>
            <PanelTitle $accent>Family Editor</PanelTitle>
          </Panel>
        </Ribbon>

        <Toolbar>
          {toolbar.map((item, i) => {
            if (item === '|') return <ToolSeparator key={i} />;
            if (item === '>') return <ToolCaret key={i}><Caret /></ToolCaret>;
            return <ToolButton key={i} aria-label={item} $active={item === 'thin'}><Icon name={item} /></ToolButton>;
          })}
          <ToolCaret $wide><svg width="10" height="9"><path d="M0 1h10" stroke="#333" strokeWidth="1.500" /><path d="M0 4h10L5 9z" fill="#333" /></svg></ToolCaret>
        </Toolbar>
        <OptionsBar />

        <Workspace>
          <Palettes>
            <PropertiesPalette>
              <PaletteHeader>Properties<PlainButton aria-label="Close properties"><Cross /></PlainButton></PaletteHeader>
              <TypeSelector>
                <Thumb>
                  <svg width="76" height="76" viewBox="0 0 76 76">
                    <path d="M0 10l38-8 34 10-4 44-30 12-38-22z" fill="#e4e4e4" />
                    <text x="14" y="54" fontFamily="Liberation Sans, sans-serif" fontWeight="bold" fontSize="64" fill="#a9a9a9" stroke="#a0a0a0" strokeWidth="2" filter="drop-shadow(-2px 1px 0 #8b8b8b)">R</text>
                  </svg>
                </Thumb>
                <svg width="10" height="6"><path d="M0 0h10L5 5z" fill="#8a8a8a" /></svg>
              </TypeSelector>
              <FamilyRow>
                <FamilySelect>
                  <select aria-label="Family"><option>Family: Mechanical Equipment</option></select>
                  <svg width="11" height="7"><path d="M1 1l4.500 5L10 1" fill="none" stroke="#444" /></svg>
                </FamilySelect>
                <EditType disabled><Icon name="editType" />Edit Type</EditType>
              </FamilyRow>
              <TableArea>
                <TableClip>
                  <PropertyTable>
                    <tbody>
                      {properties.map((row) => row.section ? (
                        <SectionRow key={row.section}>
                          <th colSpan="2">{row.section}
                            <svg width="8" height="9"><path d="M1 4l3-3 3 3M1 8l3-3 3 3" fill="none" stroke="#000" strokeWidth="1.500" /></svg>
                          </th>
                        </SectionRow>
                      ) : (
                        <PropertyRow key={row.name} $muted={row.muted}>
                          <td>{row.name}</td>
                          <td>{row.focused
                            ? <ValueInput aria-label={row.name} value={diameter} onChange={(e) => setDiameter(e.target.value)} />
                            : row.value}
                          </td>
                        </PropertyRow>
                      ))}
                    </tbody>
                  </PropertyTable>
                </TableClip>
                <ScrollBar>
                  <ScrollArrow aria-label="Scroll up"><Chevron dir="up" /></ScrollArrow>
                  <ScrollTrack $before={0} $after={95}><ScrollThumb $size={67} /></ScrollTrack>
                  <ScrollArrow aria-label="Scroll down"><Chevron dir="down" /></ScrollArrow>
                </ScrollBar>
              </TableArea>
              <PaletteFooter>
                <a href="#help">Properties help</a>
                <ApplyButton disabled>Apply</ApplyButton>
              </PaletteFooter>
            </PropertiesPalette>
            <BrowserPalette>
              <PaletteHeader>Project Browser - вопрос!.rfa<PlainButton aria-label="Close browser"><Cross /></PlainButton></PaletteHeader>
              <TreeArea>
                <Tree>
                  {tree.map((row, i) => (
                    <TreeRow key={i}>
                      {row.cells.split('').map((kind, j) => <TreeCell key={j} kind={kind} />)}
                      <Stub $short={row.icon} />
                      {row.icon && <Icon name={row.icon} />}
                      <TreeLabel $bold={row.bold} $selected={row.selected} $icon={row.icon}>{row.text}</TreeLabel>
                    </TreeRow>
                  ))}
                </Tree>
                <ScrollBar>
                  <ScrollArrow aria-label="Scroll up"><Chevron dir="up" /></ScrollArrow>
                  <ScrollTrack $before={0} $after={17}><ScrollThumb $size={295} /></ScrollTrack>
                  <ScrollArrow aria-label="Scroll down"><Chevron dir="down" /></ScrollArrow>
                </ScrollBar>
              </TreeArea>
            </BrowserPalette>
          </Palettes>

          <ViewArea>
            <ViewTabs>
              <ViewTab><Icon name="cube" /><span>{'{3D}'}</span></ViewTab>
              <ViewTab><Icon name="plan" /><span>Ref. Level</span></ViewTab>
              <ViewTab $active><Icon name="elevOn" /><span>Front</span><Cross /></ViewTab>
              <ViewTab><Icon name="elevOff" /><span>Right</span></ViewTab>
              <TabMenu aria-label="Tab list"><svg width="10" height="9"><path d="M0 1h10" stroke="#333" strokeWidth="1.500" /><path d="M0 4h10L5 9z" fill="#333" /></svg></TabMenu>
            </ViewTabs>
            <ViewBody>
              <Canvas>
                <Drawing />
                <NavBar>
                  <NavDot>×</NavDot>
                  <Icon name="wheel" />
                  <Caret color="#777" />
                  <hr />
                  <Icon name="region" />
                  <Caret color="#777" />
                  <NavDot $bottom>–</NavDot>
                </NavBar>
              </Canvas>
              <ScrollBar>
                <ScrollArrow aria-label="Scroll up"><Chevron dir="up" /></ScrollArrow>
                <ScrollTrack $before={325} $after={324}><ScrollThumb $size={21} /></ScrollTrack>
                <ScrollArrow aria-label="Scroll down"><Chevron dir="down" /></ScrollArrow>
              </ScrollBar>
            </ViewBody>
            <ViewControls>
              <ScaleButton>1 : 10</ScaleButton>
              {['detail', 'visual', 'crop', 'cropShow', 'glasses', 'constraints', 'reveal'].map((name) => (
                <PlainButton key={name} aria-label={name}><Icon name={name} /></PlainButton>
              ))}
              <ScrollBar $horizontal>
                <ScrollArrow aria-label="Scroll left"><Chevron dir="left" /></ScrollArrow>
                <ScrollTrack $horizontal $before={519} $after={519}><ScrollThumb $size={21} /></ScrollTrack>
                <ScrollArrow aria-label="Scroll right"><Chevron dir="right" /></ScrollArrow>
              </ScrollBar>
              <svg width="20" height="20"><path d="M13 6h3v3h-3zM9 10h3v3H9zM13 10h3v3h-3zM5 14h3v3H5zM9 14h3v3H9zM13 14h3v3h-3z" fill="#bbb" /></svg>
            </ViewControls>
          </ViewArea>
        </Workspace>

        <StatusBar>
          <span>Click to select, TAB for alternates, CTRL adds, SHIFT unselects.</span>
          <StatusIcons>
            {['selLinks', 'selUnder', 'selPin', 'selFace', 'dragSel', 'busy'].map((name) => (
              <PlainButton key={name} aria-label={name}><Icon name={name} /></PlainButton>
            ))}
            <FilterCount><Icon name="filterOn" />:0</FilterCount>
          </StatusIcons>
        </StatusBar>
      </Window>
    </>
  );
};

export default App;

const GlobalStyle = createGlobalStyle`
  * {
    box-sizing: border-box;
  }

  body {
    margin: 0;
    background: #ccc;
    color: #000;
    font-family: "Open Sans", "Noto Sans", sans-serif;
    font-size: 14px;
    line-height: 20px;
  }

  button, select, input {
    font: inherit;
    color: inherit;
  }

  svg {
    display: block;
    flex: none;
  }
`;

const PlainButton = styled.button`
  display: flex;
  align-items: center;
  padding: 0;
  border: 0;
  background: none;
`;

const Window = styled.div`
  display: flex;
  flex-direction: column;
  height: 100vh;
  background: #ccc;
`;

const TitleBar = styled.header`
  display: flex;
  align-items: center;
  gap: 5px;
  height: 37px;
  padding: 0 9px 5px 7px;
  color: #333;
`;

const Title = styled.h1`
  flex: 1;
  margin: 0;
  padding: 0 144px 6px 0;
  text-align: right;
  font-size: 14px;
  font-weight: 400;
`;

const Account = styled.div`
  display: flex;
  align-items: center;
  gap: 10px;
`;

const AccountButton = styled(PlainButton)`
  gap: 7px;
  margin: 0 3px 0 -3px;
`;

const Bar = styled.span`
  width: 1px;
  height: 22px;
  background: #b6b6b6;
`;

const WindowButtons = styled.div`
  display: flex;
  align-items: center;
  gap: 15px;
  margin-left: 77px;
`;

const RibbonTabs = styled.nav`
  display: flex;
  height: 25px;
  padding-left: 1px;
`;

const RibbonTab = styled(PlainButton)`
  padding: 0 13px 0 12px;
  color: #333;
  background: ${({ $active }) => ($active ? '#eee' : 'none')};
`;

const FileTab = styled(RibbonTab)`
  justify-content: center;
  width: 56px;
  margin-right: 2px;
  color: #fff;
  background: #2a7ab5;
`;

const CollapseButton = styled(PlainButton)`
  gap: 7px;
  margin-left: 28px;
`;

const Ribbon = styled.section`
  display: flex;
  height: 120px;
  padding-left: 1px;
  background: #eee;
  color: #333;
`;

const Panel = styled.div`
  display: flex;
  flex-direction: column;
  width: ${({ $width }) => $width}px;
  border-right: ${({ $last }) => ($last ? 0 : '1px solid #d6d6d6')};
`;

const PanelBody = styled.div`
  display: flex;
  flex: 1;
  justify-content: ${({ $center }) => ($center ? 'center' : 'flex-start')};
  gap: 12px;
  padding: 7px 0 0 7px;
  ${({ $center }) => $center && css`
    padding: 4px 0;
  `}
`;

const PanelTitle = styled.div`
  display: flex;
  align-items: center;
  justify-content: center;
  gap: 8px;
  height: 23px;
  padding-top: 2px;
  border-bottom: 1px solid #eee;
  background: ${({ $accent }) => ($accent ? '#c8c8e4' : 'none')};
`;

const activeBox = css`
  border: 1px solid #0a62c4;
  background: linear-gradient(#b3d0ee, #b9dcf5);
`;

const ModifyButton = styled.button`
  display: flex;
  flex-direction: column;
  align-items: center;
  justify-content: flex-start;
  gap: 5px;
  width: 53px;
  padding: 4px 0 0;
  ${activeBox}
`;

const IconButton = styled(PlainButton)`
  justify-content: center;
  border: 1px solid transparent;
  ${({ $active }) => $active && activeBox}
`;

const PropertyGrid = styled.div`
  display: grid;
  grid-template-columns: 47px 47px;
  grid-auto-rows: 41px;
  gap: 4px 2px;
  flex: 1;
  padding: 5px 3px 0;
`;

const SmallGrid = styled.div`
  display: grid;
  grid-template-columns: repeat(${({ $columns }) => $columns}, 20px);
  grid-auto-rows: 20px;
  gap: 11px;
  padding-top: 1px;
`;

const BigGrid = styled.div`
  display: grid;
  grid-template-columns: repeat(4, 38px);
  grid-auto-rows: 38px;
  gap: 7px 12px;
`;

const PasteButton = styled.button`
  display: flex;
  flex-direction: column;
  align-items: center;
  gap: 7px;
  width: 52px;
  padding: 0;
  border: 0;
  background: none;
  color: #9a9a9a;
`;

const GeometryGrid = styled.div`
  display: grid;
  grid-template-columns: 82px 1fr;
  grid-auto-rows: 20px;
  gap: 10px 0;
  flex: 1;
  padding: 25px 0 0 7px;
`;

const TextTool = styled(PlainButton)`
  gap: 9px;
`;

const StackBody = styled.div`
  display: flex;
  flex-direction: column;
  gap: 7px;
  flex: 1;
  padding: 7px 7px 0;
`;

const DropTool = styled(PlainButton)`
  gap: 9px;
  height: 38px;
`;

const LoadBody = styled.div`
  display: flex;
  justify-content: space-between;
  flex: 1;
  padding: 7px 4px 0;
`;

const LoadButton = styled.button`
  display: flex;
  flex-direction: column;
  align-items: center;
  padding: 0;
  border: 0;
  background: none;
  text-align: center;
  white-space: pre;

  svg {
    margin-bottom: 7px;
  }
`;

const Toolbar = styled.div`
  display: flex;
  align-items: center;
  height: 31px;
  padding-left: 5px;
`;

const ToolButton = styled(PlainButton)`
  justify-content: center;
  width: 30px;
  height: 27px;
  ${({ $active }) => $active && activeBox}
`;

const ToolCaret = styled(PlainButton)`
  justify-content: center;
  width: ${({ $wide }) => ($wide ? 20 : 15)}px;
`;

const ToolSeparator = styled.span`
  width: 1px;
  height: 27px;
  margin: 0 4px;
  background: #b9b9b9;
`;

const OptionsBar = styled.div`
  height: 33px;
  background: #eee;
`;

const Workspace = styled.main`
  display: flex;
  flex: 1;
  min-height: 0;
`;

const Palettes = styled.aside`
  display: flex;
  flex-direction: column;
  gap: 2px;
  width: 528px;
  padding-top: 2px;
`;

const PropertiesPalette = styled.section`
  display: flex;
  flex-direction: column;
  flex: 0 0 380px;
  padding: 0 4px 5px 2px;
  background: #eee;
`;

const BrowserPalette = styled.section`
  display: flex;
  flex-direction: column;
  flex: 1;
  min-height: 0;
  padding: 0 4px 3px 2px;
  background: #eee;
`;

const PaletteHeader = styled.h2`
  display: flex;
  align-items: center;
  justify-content: space-between;
  height: 24px;
  margin: 0;
  padding: 2px 2px 0;
  font-size: 14px;
  font-weight: 400;
  color: #333;
`;

const TypeSelector = styled.div`
  display: flex;
  align-items: center;
  justify-content: space-between;
  height: 88px;
  padding: 3px 2px 3px 3px;
  border: 1px solid #e2e2e2;
  border-bottom: 0;
  background: linear-gradient(#f5f5f5, #e9e9e9);
`;

const Thumb = styled.div`
  padding: 2px;
  border: 1px solid #dcdcdc;
  background: #ebebeb;
`;

const FamilyRow = styled.div`
  display: flex;
  align-items: center;
  gap: 6px;
  height: 30px;
`;

const FamilySelect = styled.div`
  display: flex;
  align-items: center;
  flex: 0 0 427px;
  height: 28px;
  padding-right: 5px;
  border: 1px solid #a8a8a8;
  background: #e0e0e0;

  select {
    flex: 1;
    padding: 0 3px;
    border: 0;
    background: none;
    appearance: none;
  }
`;

const EditType = styled(PlainButton)`
  gap: 2px;
  color: #9a9a9a;
`;

const TableArea = styled.div`
  display: flex;
  height: 205px;
`;

const TableClip = styled.div`
  flex: 1;
  overflow: hidden;
  padding-right: 2px;
`;

const PropertyTable = styled.table`
  width: 100%;
  table-layout: fixed;
  border-collapse: separate;
  border-spacing: 0;

  tr {
    height: 24px;
  }
`;

const SectionRow = styled.tr`
  background: #dcdcdc;

  th {
    padding: 0 2px;
    font-weight: 400;
    text-align: left;
  }

  svg {
    float: right;
    margin: 1px 3px 0 0;
  }
`;

const PropertyRow = styled.tr`
  background: #fff;
  color: ${({ $muted }) => ($muted ? '#777' : '#000')};

  td {
    height: 24px;
    padding: 0 0 2px 10px;
    border-right: 1px dotted #666;
    border-bottom: 1px dotted #666;
  }

  td + td {
    padding: 0 0 2px 2px;
  }

  td:has(input) {
    padding: 0;
  }
`;

const ValueInput = styled.input`
  display: block;
  width: 100%;
  height: 23px;
  padding: 0 1px 1px;
  border: 1px solid #000;
  background: #fff;
`;

const ScrollBar = styled.div`
  display: flex;
  flex-direction: ${({ $horizontal }) => ($horizontal ? 'row' : 'column')};
  flex: ${({ $horizontal }) => ($horizontal ? '1' : '0 0 19px')};
  background: #f0f0f0;
`;

const ScrollArrow = styled(PlainButton)`
  flex: 0 0 20px;
  justify-content: center;
`;

const ScrollTrack = styled.div`
  display: flex;
  flex-direction: ${({ $horizontal }) => ($horizontal ? 'row' : 'column')};
  flex: 1;

  &::before {
    content: "";
    flex: ${({ $before }) => $before} 0 0px;
  }

  &::after {
    content: "";
    flex: ${({ $after }) => $after} 0 0px;
  }
`;

const ScrollThumb = styled.div`
  flex: ${({ $size }) => $size} 0 0px;
  background: #cdcdcd;
`;

const PaletteFooter = styled.div`
  display: flex;
  justify-content: space-between;
  padding: 2px 1px 0 2px;

  a {
    color: #0067c0;
  }
`;

const ApplyButton = styled.button`
  width: 86px;
  height: 26px;
  padding: 0;
  border: 1px solid #bfbfbf;
  background: #ccc;
  color: #888;
`;

const TreeArea = styled.div`
  display: flex;
  flex: 1;
  min-height: 0;
`;

const Tree = styled.div`
  flex: 1;
  overflow: hidden;
  background: #fff;
`;

const TreeRow = styled.div`
  display: flex;
  align-items: center;
  height: 22px;
  margin-left: -3px;
`;

const Stub = styled.span`
  width: ${({ $short }) => ($short ? 3 : 5)}px;
  border-top: 1px dotted #8a8a8a;
`;

const TreeLabel = styled.span`
  height: 22px;
  margin-left: ${({ $icon }) => ($icon ? 3 : 0)}px;
  padding: 1px 4px;
  font-weight: ${({ $bold }) => ($bold ? 700 : 400)};
  background: ${({ $selected }) => ($selected ? '#e2e2e2' : 'none')};
`;

const ViewArea = styled.section`
  display: flex;
  flex-direction: column;
  flex: 1;
  min-width: 0;
  padding-left: 2px;
`;

const ViewTabs = styled.div`
  display: flex;
  height: 27px;
`;

const ViewTab = styled.button`
  display: flex;
  align-items: center;
  gap: 11px;
  width: 160px;
  padding: 1px 6px 0;
  border: 0;
  background: ${({ $active }) => ($active ? '#fff' : 'none')};
  color: ${({ $active }) => ($active ? '#000' : '#444')};
  font-weight: ${({ $active }) => ($active ? 700 : 400)};
  text-align: left;

  span {
    flex: 1;
  }
`;

const TabMenu = styled(PlainButton)`
  margin-left: auto;
  padding-right: 5px;
`;

const ViewBody = styled.div`
  display: flex;
  flex: 1;
  min-height: 0;
  border: 2px solid #fff;
  border-width: 2px 2px 1px 2px;
`;

const Canvas = styled.div`
  position: relative;
  flex: 1;
  min-width: 0;
  overflow: hidden;
  margin-right: 1px;
  background: #c0c0c0;
`;

const DimText = styled.text`
  font-family: "Liberation Sans", sans-serif;
  font-size: 16px;
`;

const NavBar = styled.div`
  position: absolute;
  top: 0;
  right: 0;
  display: flex;
  flex-direction: column;
  align-items: center;
  gap: 5px;
  width: 36px;
  height: 118px;
  padding-top: 17px;
  border: 2px solid #969696;
  border-radius: 5px;
  background: #ccc;

  hr {
    width: 26px;
    margin: 0 0 3px;
    border: 0;
    border-top: 1px solid #999;
  }
`;

const NavDot = styled.span`
  position: absolute;
  right: 2px;
  ${({ $bottom }) => ($bottom ? 'bottom: 2px;' : 'top: 2px;')}
  width: 9px;
  height: 9px;
  border-radius: 50%;
  background: #909090;
  color: #eee;
  font-size: 9px;
  line-height: 8px;
  text-align: center;
`;

const ViewControls = styled.div`
  display: flex;
  align-items: center;
  gap: 5px;
  height: 23px;
  padding-bottom: 1px;
  border-bottom: 2px solid #fff;
  background: #f0f0f0;

  ${ScrollBar} {
    align-self: stretch;
    margin-left: -3px;
  }
`;

const ScaleButton = styled(PlainButton)`
  width: 56px;
  margin-left: 33px;
  font-size: 13px;
`;

const StatusBar = styled.footer`
  display: flex;
  align-items: center;
  justify-content: space-between;
  height: 41px;
  padding: 0 5px 6px 2px;
`;

const StatusIcons = styled.div`
  display: flex;
  gap: 10px;
  padding-right: 70px;
  border-right: 1px solid #d8d8d8;
`;

const FilterCount = styled(PlainButton)`
  color: #444;
`;
